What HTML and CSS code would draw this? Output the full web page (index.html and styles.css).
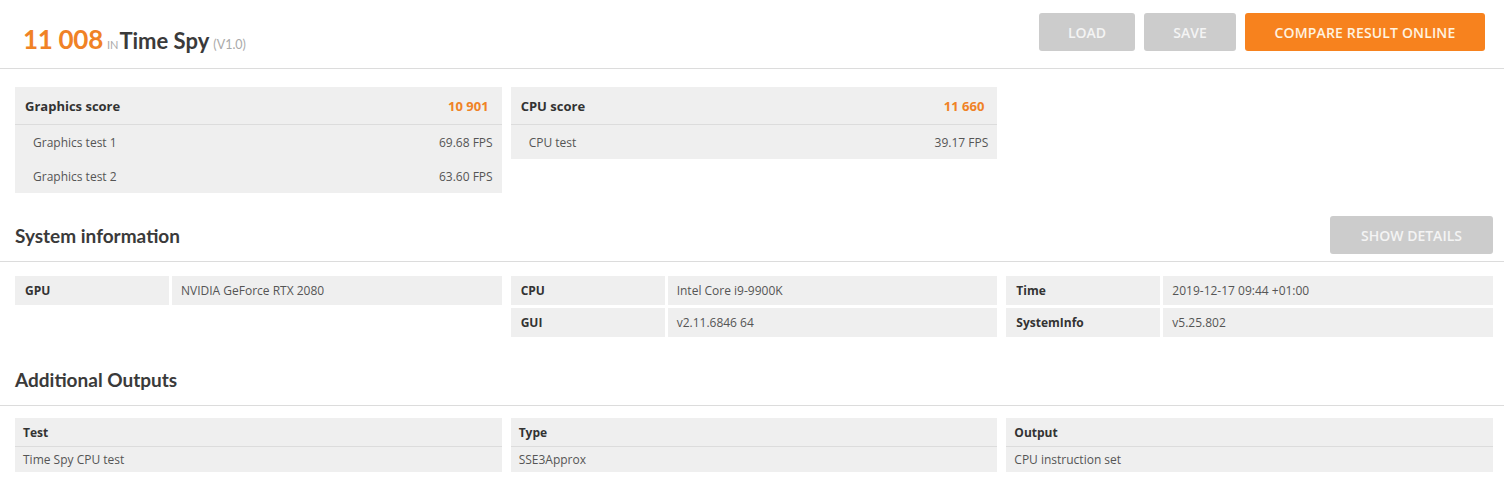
FILE: index.html
```html
<!DOCTYPE html>
<html lang="en">
<head>
<meta charset="utf-8">
<title>Time Spy result</title>
<link rel="stylesheet" href="styles.css">
</head>
<body>
<header class="top">
  <h1 class="title">
    <span class="score">11 008</span><span class="in">IN</span><span class="bench">Time Spy</span><span class="ver">(V1.0)</span>
  </h1>
  <div class="actions">
    <button class="btn btn-gray btn-load">LOAD</button>
    <button class="btn btn-gray btn-save">SAVE</button>
    <button class="btn btn-orange">COMPARE RESULT ONLINE</button>
  </div>
</header>

<main class="content">
  <section class="grid3 scores">
    <div class="panel">
      <div class="panel-head"><span>Graphics score</span><span class="pscore">10 901</span></div>
      <div class="prow"><span>Graphics test 1</span><span>69.68 FPS</span></div>
      <div class="prow"><span>Graphics test 2</span><span>63.60 FPS</span></div>
    </div>
    <div class="panel">
      <div class="panel-head"><span>CPU score</span><span class="pscore">11 660</span></div>
      <div class="prow"><span>CPU test</span><span>39.17 FPS</span></div>
    </div>
  </section>

  <div class="section-head section-first">
    <h2>System information</h2>
    <button class="btn btn-gray btn-details">SHOW DETAILS</button>
  </div>

  <section class="grid3 info">
    <div class="info-col">
      <div class="irow"><div class="ilabel">GPU</div><div class="ival">NVIDIA GeForce RTX 2080</div></div>
    </div>
    <div class="info-col">
      <div class="irow"><div class="ilabel">CPU</div><div class="ival">Intel Core i9-9900K</div></div>
      <div class="irow"><div class="ilabel">GUI</div><div class="ival">v2.11.6846 64</div></div>
    </div>
    <div class="info-col">
      <div class="irow"><div class="ilabel">Time</div><div class="ival">2019-12-17 09:44 +01:00</div></div>
      <div class="irow"><div class="ilabel">SystemInfo</div><div class="ival">v5.25.802</div></div>
    </div>
  </section>

  <div class="section-head section-second">
    <h2>Additional Outputs</h2>
  </div>

  <section class="grid3 outputs">
    <div class="ocol"><div class="ohead">Test</div><div class="ocell">Time Spy CPU test</div></div>
    <div class="ocol"><div class="ohead">Type</div><div class="ocell">SSE3Approx</div></div>
    <div class="ocol"><div class="ohead">Output</div><div class="ocell">CPU instruction set</div></div>
  </section>
</main>
</body>
</html>
```

FILE: styles.css
```css
* { box-sizing: border-box; }
html, body { margin: 0; padding: 0; background: #fff; }
body {
  font-family: "Open Sans", "Liberation Sans", sans-serif;
  color: #555;
  font-size: 12px;
}

.top {
  height: 69px;
  border-bottom: 1px solid #dcdcdc;
  display: flex;
  align-items: flex-start;
  justify-content: space-between;
  padding: 0 19px 0 23px;
}
.title {
  margin: 0;
  padding-top: 22px;
  font-family: Lato, "Liberation Sans", sans-serif;
  font-weight: 400;
  line-height: 34px;
  white-space: nowrap;
}
.score { color: #f08226; font-weight: 700; font-size: 26px; letter-spacing: -0.3px; }
.in { color: #aaa; font-size: 11px; margin-left: 4px; }
.bench { color: #3a3a3a; font-size: 22px; font-weight: 700; margin-left: 1px; }
.ver { color: #aaa; font-size: 12.5px; margin-left: 4px; }

.actions { display: flex; gap: 9px; padding-top: 13px; }
.btn {
  height: 38px;
  border: 0;
  border-radius: 3px;
  font-family: "Open Sans", "Liberation Sans", sans-serif;
  font-weight: 600;
  font-size: 14px;
  color: #fff;
  cursor: pointer;
  padding: 0;
}
.btn-gray { background: #cccccc; color: #f4f4f4; }
.btn-orange { background: #f7821e; color: #fff3e0; width: 240px; letter-spacing: 0.15px; }
.btn-load { width: 96px; }
.btn-save { width: 92px; }
.btn-details { width: 163px; }

.content { padding: 18px 11px 0 15px; }

.grid3 {
  display: grid;
  grid-template-columns: repeat(3, 1fr);
  column-gap: 9px;
}

.scores { align-items: start; }
.panel { background: #efefef; }
.panel-head {
  height: 38px;
  border-bottom: 1px solid #dcdcdc;
  display: flex;
  align-items: center;
  justify-content: space-between;
  padding: 0 13px 0 10px;
  font-weight: 700;
  font-size: 13px;
  color: #333;
}
.pscore { color: #f08226; }
.prow {
  height: 34px;
  display: flex;
  align-items: center;
  justify-content: space-between;
  padding: 0 9px 0 18px;
  font-size: 12px;
  color: #555;
}

.section-head {
  min-height: 45px;
  padding-bottom: 7px;
  border-bottom: 1px solid #dcdcdc;
  margin-left: -15px;
  margin-right: -11px;
  padding-left: 15px;
  padding-right: 11px;
  display: flex;
  align-items: center;
  justify-content: space-between;
}
.section-first { margin-top: 23px; }
.section-second { margin-top: 24px; }
.section-head h2 {
  margin: 0;
  font-family: Lato, "Liberation Sans", sans-serif;
  font-weight: 700;
  font-size: 19px;
  color: #3a3a3a;
}

.info { margin-top: 14px; align-items: start; }
.info-col { display: flex; flex-direction: column; gap: 3px; }
.irow { display: flex; gap: 3px; height: 29px; }
.ilabel {
  width: 154px;
  flex: none;
  background: #efefef;
  display: flex; align-items: center;
  padding-left: 10px;
  font-weight: 700;
  color: #333;
}
.ival {
  flex: 1;
  background: #efefef;
  display: flex; align-items: center;
  padding-left: 9px;
  color: #555;
}

.outputs { margin-top: 12px; }
.ocol { background: #efefef; }
.ohead {
  height: 29px;
  border-bottom: 1px solid #dcdcdc;
  display: flex; align-items: center;
  padding-left: 8px;
  font-weight: 700;
  color: #333;
}
.ocell {
  height: 25px;
  display: flex; align-items: center;
  padding-left: 8px;
  color: #555;
}
```
